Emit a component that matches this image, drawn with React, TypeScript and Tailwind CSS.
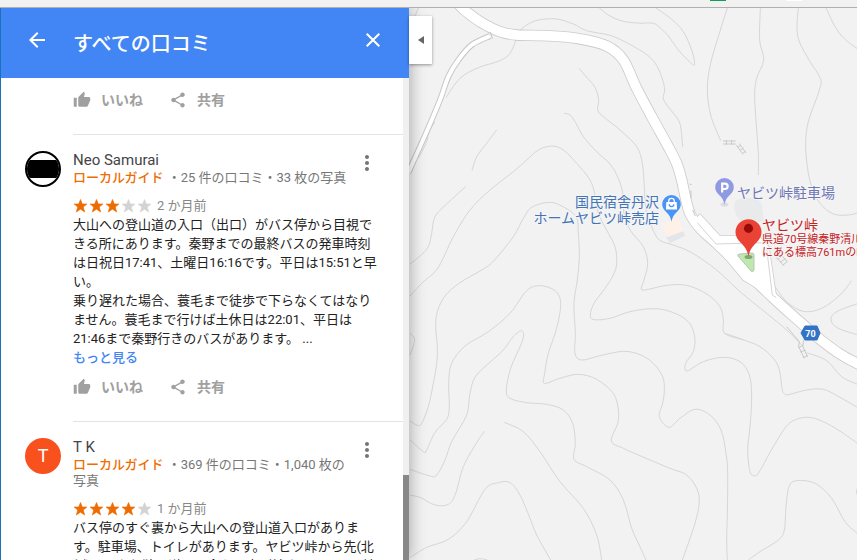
import type { ReactNode } from 'react';
import { MdArrowBack, MdClose, MdMoreVert, MdShare, MdThumbUp } from 'react-icons/md';

type Tile = { x: number; y: number; lines: string[] };

// Contour lines, grouped by map tile. Tile units are a third of a map pixel.
const tiles: Tile[] = [
  {
    x: 410,
    y: 0,
    lines: [
      '25,24 15,48',
      '327,93 350,75 385,60 440,57 490,72 530,92 600,106 650,128 692,152',
      '568,24 600,48 640,64 692,70',
      '318,120 300,160 270,182 205,203 150,235 108,293',
      '507,205 530,232 555,262 566,300 563,330 580,350 630,390 680,440 697,490 703,560 708,630 725,680 748,720 790,735 845,758 920,810 990,875 1070,940 1130,990 1175,1035',
      '462,340 480,345 497,368 520,410 560,455 600,492 625,535 638,580 642,640 660,690 700,740 713,790 702,840 694,868 715,868 770,856 830,856 890,882 930,920 940,960 944,1000 1002,1020',
      '186,512 200,470 230,430 260,390',
      '167,560 110,612 75,650 65,700 55,740 30,768 0,792',
      '0,888 35,850 75,815 97,780 130,710 180,630 240,570 310,515 350,480 385,450 425,438 460,450 500,490 540,540 555,585 565,640 590,690 615,740 620,790 610,825 585,865 552,910 541,945 552,959 600,955 660,935 730,926 785,936 835,965 854,1010 850,1055 827,1090 831,1113 880,1085 940,1072 990,1085 1018,1125 1025,1190 1020,1280 1013,1350 1020,1415 1034,1427 1048,1415 1090,1340 1130,1278 1165,1256 1205,1253 1250,1270 1300,1300 1345,1332',
      '0,1263 22,1276 35,1270 55,1220 70,1150 80,1090 82,1040 77,980 82,935 105,888 150,848 215,810 250,784 310,710 340,655 365,622 415,607 455,618 498,650 505,700 508,770 502,840 492,910 496,1000 495,1060 515,1080 570,1067 640,1054 690,1064 730,1090 758,1130 763,1170 758,1210 748,1250 777,1282 810,1255 855,1228 900,1245 933,1290 948,1360 953,1420 952,1540 950,1620 952,1680',
      '75,365 58,395 48,430 25,475',
    ],
  },
  {
    x: 640,
    y: 0,
    lines: [
      '0,150 30,172 52,200 68,240 74,270 70,297 90,327 112,355 122,380 128,440',
      '0,70 40,70 62,85 85,108 115,150 155,191 164,190 155,150 130,95 95,58 48,24',
      '262,24 235,110 212,190 202,265 212,345 242,422',
      '361,24 359,120 371,180 350,235 344,290 350,390 355,460 355,525',
      '475,24 471,80 478,125 510,185 541,235 538,270 505,365 497,430 502,500 515,560 540,610 580,642 625,645 655,638',
      '558,24 585,80 615,118 655,148',
      '405,860 440,905 490,934 545,925 600,885 635,842',
      '655,910 590,935 573,960 595,985 655,1005',
    ],
  },
  {
    x: 410,
    y: 260,
    lines: [
      '0,540 40,575 50,570 75,517 110,478 118,440 116,370 125,310 165,258 235,215 300,160 350,92 390,77 435,92 452,130 440,205 415,280 404,340 403,370 450,355 505,343 560,358 610,400 625,450 623,490 604,543 640,565 690,587 780,625 825,642 855,675 868,720 855,790 817,900',
      '0,628 60,648 80,645 105,600 125,545 170,465 180,400 200,345 275,275 310,230 335,212 338,240 302,325 289,390 300,415 350,428 410,433 460,450 488,490 496,550 492,598 530,620 600,660 640,720 665,805 690,860 708,900',
      '0,706 30,712 75,735 115,733 137,700 160,620 200,548 224,513',
      '283,487 340,515 390,575 450,665 520,745 560,825 575,900',
      '0,893 50,862 115,838 170,785 225,688 265,668 300,668 330,705 360,775 380,825 422,900',
      '0,220 14,240 0,285',
      '192,900 212,896 232,900',
    ],
  },
  {
    x: 640,
    y: 340,
    lines: [
      '254,-20 312,0 360,20 400,55 418,90 426,145 432,160 445,164 500,150 550,148 600,172 655,204',
      '500,38 560,62 605,110 655,134',
      '325,660 360,635 415,600 433,570 438,500 447,440 470,422 525,430 575,475 615,545 655,583',
      '655,440 649,455 655,470',
    ],
  },
];

function smooth(points: string): string {
  const p = points.split(' ').map((pair) => pair.split(',').map(Number));
  let d = `M${p[0][0]} ${p[0][1]}`;
  for (let i = 0; i < p.length - 1; i++) {
    const a = p[Math.max(i - 1, 0)];
    const b = p[i];
    const c = p[i + 1];
    const e = p[Math.min(i + 2, p.length - 1)];
    d += `C${b[0] + (c[0] - a[0]) / 6} ${b[1] + (c[1] - a[1]) / 6} ${c[0] - (e[0] - b[0]) / 6} ${c[1] - (e[1] - b[1]) / 6} ${c[0]} ${c[1]}`;
  }
  return d;
}

const mainRoad = smooth(
  '145,12 165,32 215,68 270,95 320,105 400,107 500,115 590,138 640,180 680,265 725,350 772,435 800,490 815,540 828,600 842,645 875,690 930,740 1090,894 1175,970 1230,1018 1290,1062 1350,1095',
);
const sideRoad = smooth('240,108 185,135 145,180 115,230 90,300 50,395 -5,518');
const junction = 'M853 663 L870 643 L930 708 L1045 706 L1076 740 L1100 900 L1000 840 Z';

function Pin({ x, y, size, fill, children }: { x: number; y: number; size: number; fill: string; children: ReactNode }) {
  return (
    <g transform={`translate(${x} ${y}) scale(${size})`}>
      <path d="M0 0C-1 -6 -3 -8 -6 -11C-8.500 -13.500 -10 -16 -10 -19A10 10 0 1 1 10 -19C10 -16 8.500 -13.500 6 -11C3 -8 1 -6 0 0Z" fill={fill} />
      {children}
    </g>
  );
}

const labelClass =
  "font-[Roboto,'Noto_Sans_CJK_JP',sans-serif] stroke-[#f5f5f5] stroke-2 [paint-order:stroke] [stroke-linejoin:round]";

function MapView() {
  return (
    <svg
      className="absolute inset-0 h-full w-full bg-[#f2f2f2]"
      viewBox="409 8 448 552"
      preserveAspectRatio="xMinYMin slice"
      role="img"
      aria-label="ヤビツ峠の地図"
    >
      <g fill="none" stroke="#d6d6d6" strokeWidth="3">
        {tiles.map((tile, i) => (
          <g key={i} transform={`translate(${tile.x} ${tile.y}) scale(${1 / 3})`}>
            {tile.lines.map((line) => (
              <path key={line} d={smooth(line)} />
            ))}
          </g>
        ))}
      </g>
      <path d="M734 205q2 -7 10 -7h8q8 0 10 8l2 16h-22q-8 -6 -8 -17Z" fill="#e9eaeb" />
      <path d="M666 237l17 -6 2 5 -15 7Z" fill="#e3e5e8" />
      <path d="M662 224l16 -8 5 15 -15 6Z" fill="#fdf1e8" />
      <g transform={`translate(410 0) scale(${1 / 3})`} fill="none" strokeLinejoin="round">
        <path d={sideRoad} stroke="#c6c6c6" strokeWidth="18" />
        <path d={mainRoad} stroke="#cbcbcb" strokeWidth="34" />
        <path d={junction} stroke="#cfcfcf" strokeWidth="5" />
        <path d={sideRoad} stroke="#fff" strokeWidth="12" />
        <path d={mainRoad} stroke="#fff" strokeWidth="29" />
        <path d={junction} fill="#fff" />
        <path d="M862 668L918 732L1068 728M1070 745L1087 885L1099 893" stroke="#d4d4d4" strokeWidth="3" />
        <path d="M240 96l8 20M839 552l6 2M843 572v22M848 630l8 18" stroke="#c4c4c4" strokeWidth="3" />
        <path d="M1130 980L1168 1025L1166 1040L1183 1075M1182 1018L1178 1038L1192 1070M1165 1043L1180 1036M1171 1056L1187 1050M1179 1073L1194 1067" stroke="#c9c9c9" strokeWidth="3" />
        <path d="M1098 772L1122 797M1111 762L1132 785M1103 779L1117 768M1110 787L1126 776M1118 796L1132 784" stroke="#c9c9c9" strokeWidth="3" />
        <path d="M939 423h38M939 432h38M949 420v14M965 420v14M979 435l20 28M988 431l20 28M983 443l10 -8M990 452l10 -8M997 461l10 -8" stroke="#c9c9c9" strokeWidth="3" />
      </g>
      <path d="M738 256q-1 -2 2 -2l12 -1q2 0 2 2v15q-1 3 -3 1Z" fill="#bde8ae" stroke="#b9c4b5" />

      <g fill="#4374b7" fontSize="14" textAnchor="end" className={labelClass}>
        <text x="659" y="207">国民宿舎丹沢</text>
        <text x="659" y="223">ホームヤビツ峠売店</text>
      </g>
      <text x="737" y="198" fill="#6f76b5" fontSize="14" className={labelClass}>ヤビツ峠駐車場</text>
      <text x="762" y="230" fill="#c5221f" fontSize="14" className={labelClass}>ヤビツ峠</text>
      <g fill="#c5221f" fontSize="11" className={labelClass}>
        <text x="762" y="243">県道70号線秦野清川線</text>
        <text x="762" y="256">にある標高761mの峠</text>
      </g>

      <Pin x={671.5} y={222} size={0.93} fill="#4a94f5">
        <path d="M-5.500 -21.500H5.500L6 -13.500H-6Z" fill="#fff" />
        <path d="M-3 -21v-1.500a3 3 0 0 1 6 0v1.500" fill="none" stroke="#fff" strokeWidth="1.400" />
        <path d="M-2.500 -19a2.500 2.500 0 0 0 5 0" fill="none" stroke="#4a94f5" strokeWidth="1.400" />
      </Pin>
      <ellipse cx="724.5" cy="204.500" rx="4" ry="2" fill="#dcdce6" />
      <Pin x={724.5} y={205} size={0.93} fill="#8f9ae2">
        <path d="M-2.500 -13.500V-23H0.500a2.900 2.900 0 0 1 0 5.800H-2.500" fill="none" stroke="#fff" strokeWidth="2.300" />
      </Pin>
      <ellipse cx="748.5" cy="257" rx="4" ry="2" fill="#7fa875" />
      <Pin x={748.5} y={257} size={1.3} fill="#ea4335">
        <circle cx="0" cy="-22" r="3.500" fill="#960a0a" />
      </Pin>
      <path d="M805 326h12l3 7 -3 7h-12l-4 -7Z" fill="#3273c6" stroke="#3273c6" strokeLinejoin="round" />
      <text x="810.5" y="336.5" fill="#fff" fontSize="9" fontWeight="700" textAnchor="middle" className="font-[Roboto,sans-serif]">70</text>
    </svg>
  );
}

function Star({ filled }: { filled: boolean }) {
  return (
    <svg width="16" height="16" viewBox="0 0 16 16" aria-hidden="true" className={filled ? 'text-[#ed6c02]' : 'text-[#d3d3d3]'}>
      <path
        fill="currentColor"
        stroke="currentColor"
        strokeWidth="0.6"
        d="M7.500 1.500L9.300 6H13.900L10.300 9.100L11.700 14L7.500 11.200L3.300 14L4.700 9.100L1.100 6H5.700Z"
      />
    </svg>
  );
}

function Actions() {
  return (
    <div className="flex h-[18px] items-center text-sm font-bold text-[#a0a0a0]">
      <button type="button" className="mr-[26px] flex items-center gap-[10px]">
        <MdThumbUp size={18} />
        いいね
      </button>
      <button type="button" className="flex items-center gap-[10px]">
        <MdShare size={18} />
        共有
      </button>
    </div>
  );
}

type ReviewProps = { name: string; meta: string; stars: number; avatar: ReactNode; age: string; children: ReactNode };

function Review({ name, meta, stars, avatar, age, children }: ReviewProps) {
  return (
    <article className="flex pl-6">
      <div className="mt-[17px] w-12 shrink-0">{avatar}</div>
      <div className="min-w-0 flex-1 border-t border-[#e3e3e3] pt-4 pb-[25px]">
        <div className="flex justify-between">
          <div className="w-[280px]">
            <h2 className="text-[15px] leading-[18px] text-[#444]">{name}</h2>
            <p className="mt-px text-[13px] leading-4 text-[#777]">
              <span className="mr-1 font-medium text-[#ef6c00]">ローカルガイド</span>
              {meta}
            </p>
          </div>
          <button type="button" aria-label="その他" className="mr-6 h-6 text-[#757575]">
            <MdMoreVert size={24} />
          </button>
        </div>
        <div className="mt-[10px] flex h-[19px] items-center">
          <span className="flex" role="img" aria-label={`${stars} つ星`}>
            {[1, 2, 3, 4, 5].map((n) => (
              <Star key={n} filled={n <= stars} />
            ))}
          </span>
          <span className="ml-1 text-[13px] text-[#888]">{age}</span>
        </div>
        <div className="mr-[22px] mb-[11px] text-[13px] leading-[19px] text-[#222]">{children}</div>
        <Actions />
      </div>
    </article>
  );
}

export default function App() {
  return (
    <div className="flex h-screen flex-col overflow-hidden bg-white font-[Roboto,'Noto_Sans_CJK_JP',sans-serif]" lang="ja">
      <div className="flex h-2 shrink-0 items-start border-b border-[#b0b0b0] bg-[#f1f1f1]">
        <i className="ml-auto h-px w-4 bg-[#0f9d58]" />
        <i className="mr-[55px] ml-[60px] h-px w-4 bg-white" />
      </div>
      <div className="flex min-h-0 flex-1 overflow-hidden">
        <aside className="z-10 flex w-[409px] shrink-0 flex-col border-l border-[#1a73b8] bg-white shadow-[0_0_16px_rgba(0,0,0,0.35)]">
          <header className="flex h-[70px] shrink-0 items-center bg-[#4285f4] px-6 text-white">
            <button type="button" aria-label="戻る" className="mb-1.5">
              <MdArrowBack size={24} />
            </button>
            <h1 className="ml-6 pt-0.5 text-xl font-medium">すべての口コミ</h1>
            <button type="button" aria-label="閉じる" className="mb-1.5 ml-auto">
              <MdClose size={24} />
            </button>
          </header>
          <div className="flex min-h-0 flex-1">
            <main className="min-w-0 flex-1 overflow-hidden">
              <div className="pt-[13px] pb-[25px] pl-[72px]">
                <Actions />
              </div>
              <Review
                name="Neo Samurai"
                meta="・25 件の口コミ・33 枚の写真"
                stars={3}
                age="2 か月前"
                avatar={
                  <div className="flex size-9 items-center overflow-hidden rounded-full border-2 border-black bg-white">
                    <div className="h-[18px] w-full bg-black" />
                  </div>
                }
              >
                <p>大山への登山道の入口（出口）がバス停から目視できる所にあります。秦野までの最終バスの発車時刻は日祝日17:41、土曜日16:16です。平日は15:51と早い。</p>
                <p>乗り遅れた場合、蓑毛まで徒歩で下らなくてはなりません。蓑毛まで行けば土休日は22:01、平日は21:46まで秦野行きのバスがあります。 ...</p>
                <button type="button" className="block font-medium text-[#4285f4]">もっと見る</button>
              </Review>
              <Review
                name="T K"
                meta="・369 件の口コミ・1,040 枚の写真"
                stars={4}
                age="1 か月前"
                avatar={
                  <div className="flex size-9 items-center justify-center rounded-full bg-[#f8511d] text-lg text-white">T</div>
                }
              >
                <p>バス停のすぐ裏から大山への登山道入口があります。駐車場、トイレがあります。ヤビツ峠から先(北側)はかなり狭い道で、今も工事が続きますので、続く</p>
              </Review>
            </main>
            <div className="flex w-1.5 shrink-0 flex-col bg-[#f0f0f0]">
              <div className="mt-[397px] flex-1 bg-[#888]" />
            </div>
          </div>
        </aside>
        <section className="relative min-w-0 flex-1">
          <MapView />
          <button
            type="button"
            aria-label="サイドパネルを閉じる"
            className="absolute top-2 left-0 z-20 flex h-12 w-[23px] items-center justify-center bg-white shadow-[0_1px_3px_rgba(0,0,0,0.4)]"
          >
            <svg width="6" height="8" viewBox="0 0 6 8" aria-hidden="true">
              <path d="M6 0v8L0 4Z" fill="#666" />
            </svg>
          </button>
        </section>
      </div>
    </div>
  );
}
